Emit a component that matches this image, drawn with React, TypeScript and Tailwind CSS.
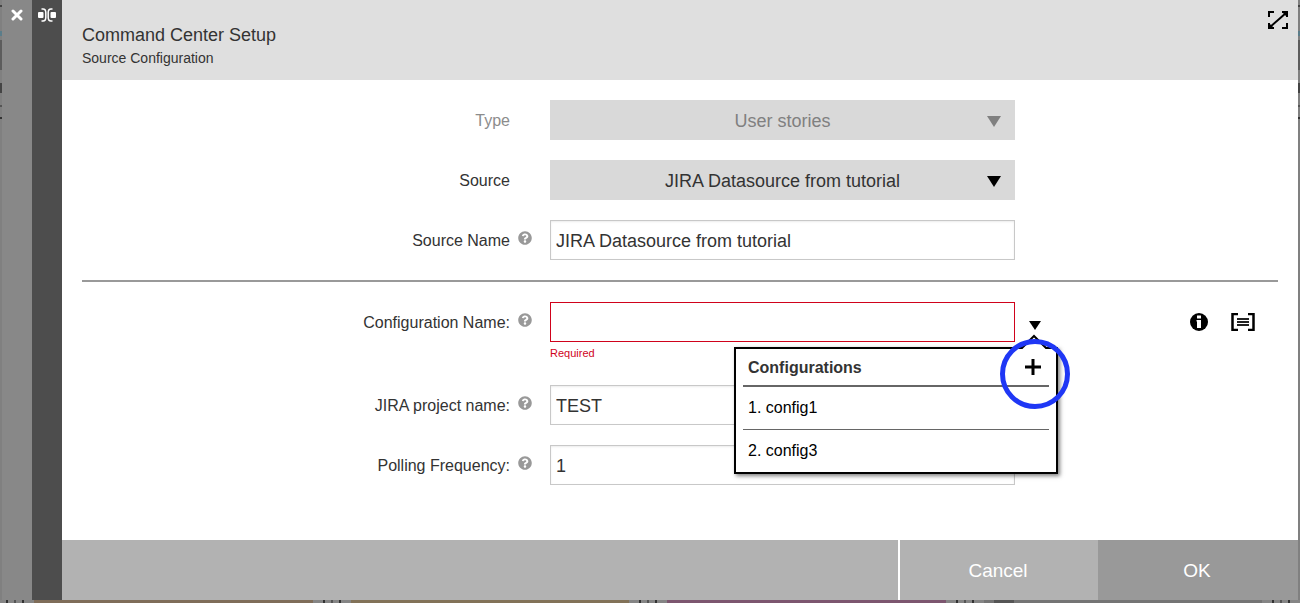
import { useState } from 'react';
import type { ReactNode } from 'react';
import { FaQuestionCircle } from 'react-icons/fa';

const CONFIGURATIONS = ['config1', 'config3'];

const INPUT =
  'block h-10 w-full border border-[#c8c8c8] bg-white px-[5px] pt-[2px] text-lg text-[#333] shadow-[inset_0_1px_2px_rgba(0,0,0,0.08)] outline-none';

function CloseIcon() {
  return (
    <svg width="12" height="12" viewBox="0 0 12 12" stroke="#fff" strokeWidth="3" strokeLinecap="round">
      <path d="M2 2l8 8M10 2L2 10" />
    </svg>
  );
}

function SplitIcon() {
  return (
    <svg width="18" height="14" viewBox="0 0 18 14" fill="none" stroke="#fff" strokeWidth="1.5">
      <rect x="0" y="4" width="5.5" height="6" rx="1" fill="#fff" stroke="none" />
      <rect x="12.5" y="4" width="5.5" height="6" rx="1" fill="#fff" stroke="none" />
      <path d="M3.5 1H5c1.800 0 2.800 1.500 2.800 3.500v5C7.800 11.500 6.800 13 5 13H3.500" />
      <path d="M14.500 1H13c-1.800 0-2.800 1.500-2.800 3.500v5c0 2 1 3.500 2.800 3.500h1.500" />
    </svg>
  );
}

function ExpandIcon() {
  return (
    <svg width="20" height="18" viewBox="0 0 20 18" fill="none" stroke="#000" strokeWidth="2">
      <path d="M1 6V1h5M19 12v5h-5" />
      <path d="M14 1h5v5M1 12v5h5" />
      <path d="M2 16L18 2" />
      <path d="M14 1h5v5zM1 12v5h5z" fill="#000" stroke="none" />
    </svg>
  );
}

function InfoIcon() {
  return (
    <svg width="18" height="18" viewBox="0 0 18 18">
      <circle cx="9" cy="9" r="9" fill="#000" />
      <path d="M7 2.500h4v3H7zM6.500 7h4.500v8H7V8.500h-.5z" fill="#fff" />
    </svg>
  );
}

function ListIcon() {
  return (
    <svg width="24" height="18" viewBox="0 0 24 18" fill="none" stroke="#000">
      <path d="M7 1H1.500v16H7M17 1h5.500v16H17" strokeWidth="2.500" />
      <path d="M6 6h12M6 9h12M6 12h12" stroke="#222" strokeWidth="2" />
    </svg>
  );
}

function Triangle({ className }: { className: string }) {
  return (
    <svg viewBox="0 0 14 11" preserveAspectRatio="none" fill="currentColor" className={className}>
      <path d="M0 0h14L7 11z" />
    </svg>
  );
}

type RowProps = {
  id: string;
  label: string;
  help?: boolean;
  muted?: boolean;
  extra?: ReactNode;
  children: ReactNode;
};

function Row({ id, label, help, muted, extra, children }: RowProps) {
  return (
    <div className="grid grid-cols-[428fr_40fr_465fr_263fr]">
      <label
        htmlFor={id}
        className={`h-10 text-right text-base leading-[42px] whitespace-nowrap ${muted ? 'text-[#8c8c8c]' : 'text-[#333]'}`}
      >
        {label}
      </label>
      <div className="pt-[11px] pl-2">
        {help && <FaQuestionCircle className="size-[14px] text-[#999]" />}
      </div>
      <div>{children}</div>
      <div>{extra}</div>
    </div>
  );
}

function SelectBox({ id, value, disabled }: { id: string; value: string; disabled?: boolean }) {
  return (
    <div className={`relative ${disabled ? 'text-[#808080]' : 'text-black'}`}>
      <select
        id={id}
        disabled={disabled}
        className={`block h-10 w-full appearance-none bg-[#d9d9d9] pt-[2px] text-lg opacity-100 outline-none [text-align-last:center] ${disabled ? 'text-[#808080]' : 'text-[#333]'}`}
      >
        <option>{value}</option>
      </select>
      <Triangle className="pointer-events-none absolute top-4 right-[14px] h-[11px] w-[14px]" />
    </div>
  );
}

function ConfigMenu() {
  return (
    <div className="absolute top-[45px] right-0 z-10 w-[324px] border-2 border-black bg-white px-[7px] shadow-[2px_2px_4px_rgba(0,0,0,0.5)]">
      <svg width="26" height="15" viewBox="0 0 26 15" className="absolute -top-[15px] right-[9px]">
        <path d="M1 14L13 2l12 12v1H1z" fill="#fff" />
        <path d="M0 14h1L13 2l12 12h1" fill="none" stroke="#000" strokeWidth="2" />
      </svg>
      <div className="flex h-[38px] items-center justify-between border-b-2 border-[#666] pr-2 pl-[5px]">
        <h2 className="pt-[2px] text-base font-bold text-[#333]">Configurations</h2>
        <button type="button" aria-label="Add configuration">
          <svg width="16" height="16" viewBox="0 0 16 16" stroke="#000" strokeWidth="3">
            <path d="M8 0v16M0 8h16" />
          </svg>
        </button>
      </div>
      <ul className="divide-y divide-[#666]">
        {CONFIGURATIONS.map((name, i) => (
          <li key={name}>
            <button type="button" className="block h-[42px] w-full pl-[5px] text-left text-base text-black">
              {i + 1}. {name}
            </button>
          </li>
        ))}
      </ul>
      <svg
        width="72"
        height="72"
        viewBox="0 0 72 72"
        fill="none"
        className="pointer-events-none absolute -top-[11px] -right-[15px]"
      >
        <ellipse cx="36" cy="36" rx="32.5" ry="32.5" stroke="#1f37f5" strokeWidth="5" />
      </svg>
    </div>
  );
}

function Ticks() {
  return (
    <div className="flex w-[38px] shrink-0 gap-[6px] bg-[#858585] pl-[10px]">
      <i className="w-[2px] bg-[#333]" />
      <i className="w-[2px] bg-[#555]" />
      <i className="w-[2px] bg-[#333]" />
    </div>
  );
}

// sliver of the dashboard that stays visible beside the dialog
function PageEdge() {
  return (
    <div className="flex w-[2px] shrink-0 flex-col bg-[#808080]">
      <i className="mt-[5px] h-[2px] bg-[#444]" />
      <i className="mt-[24px] h-[5px] bg-[#5b7d8a]" />
      <i className="mt-[4px] h-[30px] bg-[#5c5c5c]" />
      <i className="mt-[13px] h-[10px] bg-[#444]" />
      <i className="mt-[12px] h-[2px] bg-[#555]" />
      <i className="mt-[10px] h-[2px] bg-[#333]" />
    </div>
  );
}

export default function App() {
  const [sourceName, setSourceName] = useState('JIRA Datasource from tutorial');
  const [configName, setConfigName] = useState('');
  const [project, setProject] = useState('TEST');
  const [polling, setPolling] = useState('1');

  return (
    <div className="flex min-h-screen flex-col bg-[#808080] font-['Liberation_Sans',Arial,sans-serif]">
      <div className="flex flex-1">
        <PageEdge />
        <div className="flex w-[30px] shrink-0 flex-col items-center bg-[#888] pt-[9px]">
          <button type="button" aria-label="Close">
            <CloseIcon />
          </button>
        </div>
        <div className="flex w-[30px] shrink-0 flex-col items-center bg-[#4d4d4d] pt-2">
          <button type="button" aria-label="Resize">
            <SplitIcon />
          </button>
        </div>

        <main className="flex min-w-0 flex-1 flex-col bg-white">
          <header className="flex h-20 items-start justify-between bg-[#dfdfdf] pr-[10px] pl-5 text-[#333]">
            <div className="pt-[23px]">
              <h1 className="text-lg leading-6">Command Center Setup</h1>
              <p className="text-sm leading-[22px]">Source Configuration</p>
            </div>
            <button type="button" aria-label="Full screen" className="pt-[11px]">
              <ExpandIcon />
            </button>
          </header>

          <form className="flex flex-1 flex-col gap-5 px-5 pt-5 pb-[55px]">
            <Row id="type" label="Type" muted>
              <SelectBox id="type" value="User stories" disabled />
            </Row>
            <Row id="source" label="Source">
              <SelectBox id="source" value="JIRA Datasource from tutorial" />
            </Row>
            <Row id="source-name" label="Source Name" help>
              <input
                id="source-name"
                className={INPUT}
                value={sourceName}
                onChange={(e) => setSourceName(e.target.value)}
              />
            </Row>

            <hr className="border-t-2 border-[#999]" />

            <Row
              id="config-name"
              label="Configuration Name:"
              help
              extra={
                <div className="flex h-10 items-start justify-between">
                  <div className="relative h-10 w-[43px]">
                    <button type="button" aria-label="Show configurations" className="block pt-[19px] pl-[14px]">
                      <Triangle className="h-[9px] w-[12px]" />
                    </button>
                    <ConfigMenu />
                  </div>
                  <div className="flex gap-[23px] pt-[11px] pr-[23px]">
                    <button type="button" aria-label="Information">
                      <InfoIcon />
                    </button>
                    <button type="button" aria-label="Properties">
                      <ListIcon />
                    </button>
                  </div>
                </div>
              }
            >
              <input
                id="config-name"
                className="block h-10 w-full border border-[#d0021b] bg-white px-[5px] pt-[2px] text-lg text-[#333] outline-none"
                value={configName}
                onChange={(e) => setConfigName(e.target.value)}
              />
              <p className="h-[23px] text-[11px] leading-[23px] text-[#d0021b]">Required</p>
            </Row>
            <Row id="project" label="JIRA project name:" help>
              <input
                id="project"
                className={INPUT}
                value={project}
                onChange={(e) => setProject(e.target.value)}
              />
            </Row>
            <Row id="polling" label="Polling Frequency:" help>
              <input
                id="polling"
                className={INPUT}
                value={polling}
                onChange={(e) => setPolling(e.target.value)}
              />
            </Row>
          </form>

          <footer className="flex h-[60px] bg-[#b2b2b2] text-[19px] text-white">
            <button type="button" className="ml-auto w-[200px] border-l-2 border-white pt-[2px] pr-[2px]">
              Cancel
            </button>
            <button type="button" className="w-[200px] bg-[#999] pt-[2px] pr-[2px]">
              OK
            </button>
          </footer>
        </main>
        <PageEdge />
      </div>

      <div className="flex h-[3px] overflow-hidden">
        <div className="-ml-1 flex">
          <Ticks />
        </div>
        <div className="flex-1 bg-[#7f6d59]" />
        <Ticks />
        <div className="flex-1 bg-[#827258]" />
        <Ticks />
        <div className="flex-1 bg-[#7c566f]" />
        <Ticks />
        <div className="flex-1 bg-[#747474]">
          <div className="ml-[10px] h-full w-5 bg-[#555]" />
        </div>
        <Ticks />
      </div>
    </div>
  );
}
